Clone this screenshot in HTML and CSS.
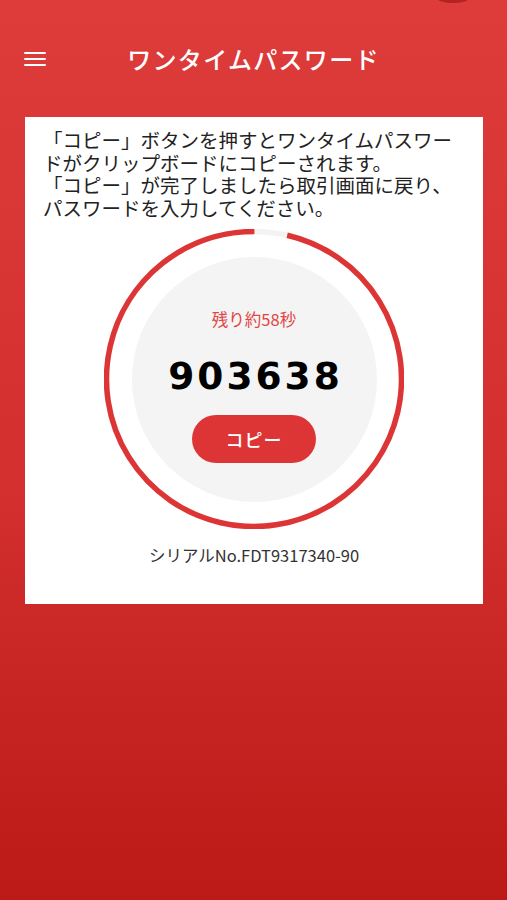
FILE: index.html
```html
<!DOCTYPE html>
<html lang="ja">
<head>
    <meta charset="UTF-8">
    <meta name="viewport" content="width=device-width, initial-scale=1.0">
    <title>ワンタイムパスワード</title>
    <link rel="stylesheet" href="styles.css">
</head>
<body>
    <div class="app">
        <span class="notch"></span>
        <header class="topbar">
            <div class="menu-btn">
                <span></span><span></span><span></span>
            </div>
            <h1 class="title">ワンタイムパスワード</h1>
            <div></div>
        </header>

        <main class="card">
            <p class="guide">「コピー」ボタンを押すとワンタイムパスワー<br>ドがクリップボードにコピーされます。<br>「コピー」が完了しましたら取引画面に戻り、<br>パスワードを入力してください。</p>

            <div class="timer">
                <svg class="ring" viewBox="0 0 300 300" width="300" height="300">
                    <circle cx="150" cy="150" r="147.5" fill="none" stroke="#f3f3f3" stroke-width="5.5"/>
                    <circle cx="150" cy="150" r="147.5" fill="none" stroke="#dd3535" stroke-width="5.5"
                        stroke-dasharray="893.3 926.8" transform="rotate(-77 150 150)"/>
                </svg>
                <div class="face">
                    <p class="remain">残り約58秒</p>
                    <p class="otp">903638</p>
                    <button class="copy-btn">コピー</button>
                </div>
            </div>

            <p class="serial">シリアルNo.FDT9317340-90</p>
        </main>
    </div>
</body>
</html>
```

FILE: styles.css
```css
body { margin: 0; font-family: "Noto Sans CJK JP", "Noto Sans", sans-serif; }
.app { position: relative; min-height: 900px; background: linear-gradient(180deg, #de3b3b 0%, #d22f2e 55%, #bb1a17 100%); overflow: hidden; }
.notch { position: absolute; top: -5px; left: 438px; width: 30px; height: 8px; border-radius: 50%; background: #b42222; }

.topbar { display: grid; grid-template-columns: 1fr auto 1fr; align-items: center; height: 80px; padding-top: 18px; }
.menu-btn { display: flex; flex-direction: column; gap: 4px; padding-left: 24px; padding-top: 2px; }
.menu-btn span { display: block; width: 22px; height: 2px; background: #fff; border-radius: 1px; }
.title { margin: 0; color: #fff; font-size: 24px; font-weight: 500; letter-spacing: 1.3px; }

.card { margin: 19px 24px 0 25px; background: #fff; padding: 12px 18px 39px; }
.guide { margin: 0 -18px 0 0; font-size: 19.5px; line-height: 22.5px; color: #222; white-space: nowrap; }

.timer { position: relative; width: 300px; height: 300px; margin: 10px auto 0; display: flex; align-items: center; justify-content: center; }
.ring { position: absolute; top: 0; left: 0; }
.face { width: 245px; height: 245px; border-radius: 50%; background: #f4f4f4; display: flex; flex-direction: column; align-items: center; padding-top: 52px; box-sizing: border-box; }
.remain { margin: 0; font-size: 16.5px; line-height: 20px; color: #e04646; }
.otp { margin: 25px 0 0; font-family: "DejaVu Sans", sans-serif; font-weight: bold; font-size: 37.5px; line-height: 44px; letter-spacing: 3px; color: #000; padding-left: 3px; }
.copy-btn { margin-top: 17px; width: 124px; height: 48px; border: none; border-radius: 24px; background: #dd3535; color: #fff; font-family: inherit; font-size: 18px; font-weight: 500; letter-spacing: 1px; }

.serial { margin: 16px 0 0; text-align: center; font-size: 16.5px; line-height: 20px; color: #333; }
```
